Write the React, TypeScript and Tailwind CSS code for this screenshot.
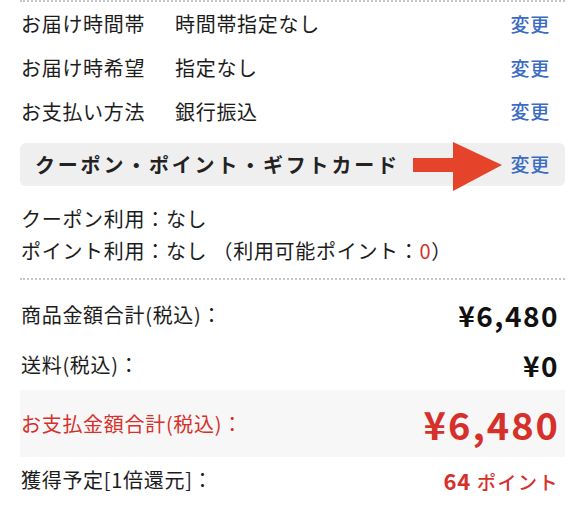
import React from 'react';

const ChangeLink: React.FC = () => (
  <span className="text-[19px] font-medium text-[#3b6cc4] tracking-[0.8px]">変更</span>
);

const InfoRow: React.FC<{ label: string; value: string; h: string }> = ({ label, value, h }) => (
  <div className={`flex items-center pr-[15px] ${h}`}>
    <span className="w-[154px] shrink-0">{label}</span>
    <span className="flex-1">{value}</span>
    <ChangeLink />
  </div>
);

const App: React.FC = () => {
  return (
    <div
      className="w-[572px] h-[506px] overflow-hidden bg-white pl-[20px] pr-[7px] text-[20px] text-[#1c1c1c] tracking-[0.7px]"
      style={{ fontFamily: '"Noto Sans CJK JP", "Noto Sans", sans-serif' }}
    >
      <div className="border-t-2 border-dotted border-[#c4c4c4]" />

      <div className="pl-[1px]">
        <InfoRow label="お届け時間帯" value="時間帯指定なし" h="h-[44px]" />
        <InfoRow label="お届け時希望" value="指定なし" h="h-[44px]" />
        <InfoRow label="お支払い方法" value="銀行振込" h="h-[43px]" />
      </div>

      {/* coupon box */}
      <div className="relative mt-[10px] flex h-[43px] items-center justify-between rounded-[6px] bg-[#efefef] pl-[15px] pr-[15px]">
        <span className="font-bold tracking-[2.8px] text-[#222]">クーポン・ポイント・ギフトカード</span>
        <ChangeLink />
        <svg
          className="absolute left-[393px] top-[-1px]"
          width="89"
          height="49"
          viewBox="0 0 89 49"
        >
          <rect x="0" y="16" width="42" height="14" fill="#e5432a" />
          <polygon points="40,0 89,23 40,49" fill="#e5432a" />
        </svg>
      </div>

      <div className="mt-[17px] pl-[1px]">
        <div className="flex h-[32px] items-center">クーポン利用：なし</div>
        <div className="flex h-[32px] items-center">
          ポイント利用：なし （利用可能ポイント：<span className="text-[#d6302b]">0</span>）
        </div>
      </div>

      <div className="mt-[11px] border-t-2 border-dotted border-[#c4c4c4]" />

      <div className="pt-[10px]">
        <div className="flex h-[50px] items-center justify-between pl-[1px] pr-[6px]">
          <span>商品金額合計(税込)：</span>
          <span className="text-[28px] font-semibold tracking-[1.5px] text-[#111]">¥6,480</span>
        </div>
        <div className="flex h-[50px] items-center justify-between pl-[1px] pr-[6px]">
          <span>送料(税込)：</span>
          <span className="text-[28px] font-semibold tracking-[1.5px] text-[#111]">¥0</span>
        </div>
        <div className="flex h-[67px] items-center justify-between bg-[#f7f7f7] pl-[1px] pr-[5px]">
          <span className="text-[#d6302b]">お支払金額合計(税込)：</span>
          <span className="text-[38px] font-bold tracking-[2px] text-[#d6302b]">¥6,480</span>
        </div>
        <div className="flex h-[46px] items-center justify-between pl-[1px] pr-[6px]">
          <span>獲得予定[1倍還元]：</span>
          <span className="flex items-baseline gap-[6px] text-[#d6302b]">
            <span className="text-[22px] font-semibold">64</span>
            <span className="text-[19px] font-medium tracking-[1.5px]">ポイント</span>
          </span>
        </div>
      </div>
    </div>
  );
};

export default App;
